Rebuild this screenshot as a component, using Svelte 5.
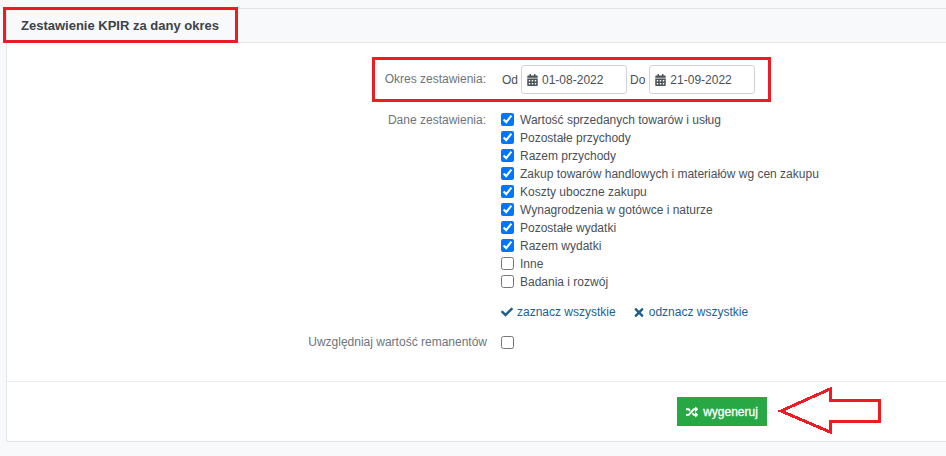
<script>
  const CAL = "M0 464c0 26.5 21.5 48 48 48h352c26.5 0 48-21.5 48-48V192H0v272zm320-196c0-6.6 5.4-12 12-12h40c6.6 0 12 5.4 12 12v40c0 6.6-5.4 12-12 12h-40c-6.6 0-12-5.4-12-12v-40zm0 128c0-6.6 5.4-12 12-12h40c6.6 0 12 5.4 12 12v40c0 6.6-5.4 12-12 12h-40c-6.6 0-12-5.4-12-12v-40zM192 268c0-6.6 5.4-12 12-12h40c6.6 0 12 5.4 12 12v40c0 6.6-5.4 12-12 12h-40c-6.6 0-12-5.4-12-12v-40zm0 128c0-6.6 5.4-12 12-12h40c6.6 0 12 5.4 12 12v40c0 6.6-5.4 12-12 12h-40c-6.6 0-12-5.4-12-12v-40zM64 268c0-6.6 5.4-12 12-12h40c6.6 0 12 5.4 12 12v40c0 6.6-5.4 12-12 12H76c-6.6 0-12-5.4-12-12v-40zm0 128c0-6.6 5.4-12 12-12h40c6.6 0 12 5.4 12 12v40c0 6.6-5.4 12-12 12H76c-6.6 0-12-5.4-12-12v-40zM400 64h-48V16c0-8.8-7.2-16-16-16h-32c-8.8 0-16 7.2-16 16v48H160V16c0-8.8-7.2-16-16-16h-32c-8.8 0-16 7.2-16 16v48H48C21.5 64 0 85.5 0 112v48h448v-48c0-26.5-21.5-48-48-48z";

  const fields = [
    { label: "Wartość sprzedanych towarów i usług", on: true },
    { label: "Pozostałe przychody", on: true },
    { label: "Razem przychody", on: true },
    { label: "Zakup towarów handlowych i materiałów wg cen zakupu", on: true },
    { label: "Koszty uboczne zakupu", on: true },
    { label: "Wynagrodzenia w gotówce i naturze", on: true },
    { label: "Pozostałe wydatki", on: true },
    { label: "Razem wydatki", on: true },
    { label: "Inne", on: false },
    { label: "Badania i rozwój", on: false }
  ];
</script>

<div class="page">
  <div class="card">
    <div class="card-header">
      <h1>Zestawienie KPIR za dany okres</h1>
      <span class="mark mark-title"></span>
    </div>

    <form class="body" onsubmit={(e) => e.preventDefault()}>
      <div class="row range">
        <div class="name">Okres zestawienia:</div>
        <div class="dates">
          <span class="from">Od</span>
          <div class="date">
            <svg viewBox="0 0 448 512" width="11" height="12"><path d={CAL} /></svg>
            <span>01-08-2022</span>
          </div>
          <span class="to">Do</span>
          <div class="date">
            <svg viewBox="0 0 448 512" width="11" height="12"><path d={CAL} /></svg>
            <span>21-09-2022</span>
          </div>
        </div>
        <span class="mark mark-range"></span>
      </div>

      <div class="row fields">
        <div class="name">Dane zestawienia:</div>
        <div>
          {#each fields as f}
            <label class="check">
              <input type="checkbox" checked={f.on} />
              <span>{f.label}</span>
            </label>
          {/each}
          <div class="links">
            <a href="#all">
              <svg viewBox="0 0 512 512" width="12" height="12"><path d="M173.898 439.404l-166.4-166.4c-9.997-9.997-9.997-26.206 0-36.204l36.203-36.204c9.997-9.998 26.207-9.998 36.204 0L192 312.69 432.095 72.596c9.997-9.997 26.207-9.997 36.204 0l36.203 36.204c9.997 9.997 9.997 26.206 0 36.204l-294.4 294.401c-9.998 9.997-26.207 9.997-36.204-.001z" /></svg>
              zaznacz wszystkie
            </a>
            <a href="#none" class="off">
              <svg viewBox="0 0 352 512" width="10" height="13"><path d="M242.72 256l100.07-100.07c12.28-12.28 12.28-32.19 0-44.48l-22.24-22.24c-12.28-12.28-32.19-12.28-44.48 0L176 189.28 75.93 89.21c-12.28-12.28-32.19-12.28-44.48 0L9.21 111.45c-12.28 12.28-12.28 32.19 0 44.48L109.28 256 9.21 356.07c-12.28 12.28-12.28 32.19 0 44.48l22.24 22.24c12.28 12.28 32.2 12.28 44.48 0L176 322.72l100.07 100.07c12.28 12.28 32.2 12.28 44.48 0l22.24-22.24c12.28-12.28 12.28-32.19 0-44.48L242.72 256z" /></svg>
              odznacz wszystkie
            </a>
          </div>
        </div>
      </div>

      <div class="row stock">
        <div class="name">Uwzględniaj wartość remanentów</div>
        <input type="checkbox" />
      </div>
    </form>

    <div class="card-footer">
      <button type="button">
        <svg viewBox="0 0 512 512" width="12" height="12"><path d="M504.971 359.029c9.373 9.373 9.373 24.569 0 33.941l-80 79.984c-15.01 15.01-40.971 4.49-40.971-16.971V416h-58.785a12.004 12.004 0 0 1-8.773-3.812l-70.556-75.596 53.333-57.143L352 336h32v-39.981c0-21.438 25.943-31.998 40.971-16.971l80 79.981zM12 176h84l52.781 56.551 53.333-57.143-70.556-75.596A11.999 11.999 0 0 0 122.785 96H12c-6.627 0-12 5.373-12 12v56c0 6.627 5.373 12 12 12zm372 0v39.984c0 21.46 25.961 31.98 40.971 16.971l80-79.984c9.373-9.373 9.373-24.569 0-33.941l-80-79.981C409.943 24.021 384 34.582 384 56.019V96h-58.785a12.004 12.004 0 0 0-8.773 3.812L96 336H12c-6.627 0-12 5.373-12 12v56c0 6.627 5.373 12 12 12h110.785c3.326 0 6.503-1.381 8.773-3.812L352 176h32z" /></svg>
        wygeneruj
      </button>
      <svg class="arrow" viewBox="0 0 104 47" width="104" height="47" shape-rendering="crispEdges">
        <path d="M3 24 L52 2 V13 L101 13 V34 L52 34 V45 Z" fill="none" stroke="#ed1c24" stroke-width="3" />
      </svg>
    </div>
  </div>
</div>

<style>
  :global(body) {
    background: #f8f9fa;
    overflow: hidden;
  }

  .page {
    height: 456px;
    padding: 8px 0 0 6px;
    box-sizing: border-box;
    font-family: "Liberation Sans", Arial, sans-serif;
    font-size: 12px;
    color: #495057;
  }

  .card {
    height: 434px;
    box-sizing: border-box;
    background: #fff;
    border: 1px solid #e3e4e6;
    border-right: none;
    border-radius: 3px 0 0 3px;
    display: flex;
    flex-direction: column;
  }

  .card-header {
    position: relative;
    height: 33px;
    background: #f8f9fa;
    border-bottom: 1px solid #e3e4e6;
    display: flex;
    align-items: center;
    padding-left: 14px;
  }

  h1 {
    margin: 0;
    font-size: 13px;
    font-weight: 700;
    color: #3d4349;
  }

  .mark {
    position: absolute;
    border: 3px solid #ed1c24;
    box-sizing: border-box;
  }

  .mark-title {
    left: -4px;
    top: -2px;
    width: 235px;
    height: 36px;
  }

  .mark-range {
    left: -8px;
    top: -8px;
    width: 399px;
    height: 45px;
  }

  .body {
    flex: 1;
    padding-top: 22px;
  }

  .row {
    display: grid;
    grid-template-columns: 479px auto;
    column-gap: 15px;
  }

  .name {
    text-align: right;
    color: #6c757d;
  }

  .range {
    position: relative;
    width: 390px;
    margin-left: 373px;
    grid-template-columns: 106px auto;
    align-items: center;
    height: 29px;
  }

  .range .name {
    padding-bottom: 2px;
  }

  .dates {
    display: flex;
    align-items: center;
  }

  .from {
    margin-left: 1px;
    margin-right: -1px;
  }

  .date {
    width: 106px;
    height: 29px;
    box-sizing: border-box;
    margin-left: 4px;
    border: 1px solid #ced4da;
    border-radius: 3px;
    display: flex;
    align-items: center;
    gap: 4px;
    padding-left: 5px;
  }

  .date svg {
    fill: #495057;
  }

  .to {
    margin-left: 3px;
  }

  .fields {
    margin-top: 17px;
  }

  .fields .name {
    line-height: 18px;
  }

  .check {
    display: flex;
    align-items: center;
    height: 18px;
    gap: 6px;
  }

  .check input {
    margin-bottom: 1px;
  }

  input {
    width: 13px;
    height: 13px;
    margin: 0;
  }

  .links {
    display: flex;
    gap: 18px;
    margin-top: 12px;
    line-height: 18px;
  }

  a {
    color: #1d5f93;
    text-decoration: none;
    display: flex;
    align-items: center;
    gap: 4px;
  }

  a.off {
    gap: 5px;
  }

  a svg {
    fill: #1d5f93;
  }

  .stock {
    margin-top: 12px;
    grid-template-columns: 480px auto;
    column-gap: 14px;
    align-items: center;
    height: 18px;
  }

  .card-footer {
    position: relative;
    height: 60px;
    box-sizing: border-box;
    border-top: 1px solid #ececee;
    display: flex;
    align-items: center;
    padding-left: 670px;
  }

  button {
    width: 90px;
    height: 29px;
    background: #28a745;
    color: #fff;
    border: none;
    font: 400 12px "Liberation Sans", Arial, sans-serif;
    -webkit-text-stroke: 0.3px #fff;
    display: flex;
    align-items: center;
    justify-content: center;
    gap: 5px;
    padding: 0;
  }

  button svg {
    fill: #fff;
  }

  .arrow {
    position: absolute;
    left: 771px;
    top: 5px;
  }
</style>
